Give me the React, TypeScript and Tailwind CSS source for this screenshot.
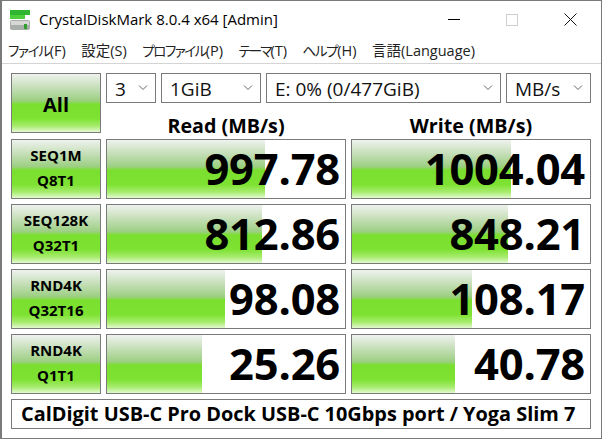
import React from 'react';

const FONT = "font-['Open_Sans','Noto_Sans_CJK_JP',sans-serif]";
const BAR = 'bg-[linear-gradient(to_bottom,#eef2ee_0%,#c8e0bc_22%,#9ccf82_46%,#7bdf2f_52%,#7ee232_77%,#a8ec70_90%,#e4f9d0_100%)]';

const rows = [
  { top: 'SEQ1M', bottom: 'Q8T1', read: '997.78', readBar: 158, write: '1004.04', writeBar: 159 },
  { top: 'SEQ128K', bottom: 'Q32T1', read: '812.86', readBar: 155, write: '848.21', writeBar: 156 },
  { top: 'RND4K', bottom: 'Q32T16', read: '98.08', readBar: 118, write: '108.17', writeBar: 120 },
  { top: 'RND4K', bottom: 'Q1T1', read: '25.26', readBar: 95, write: '40.78', writeBar: 103 },
];

// the kana in the menu run narrower than Noto's, so they get their own size and tracking
const menus = [
  { kana: 'ファイル', tight: 'text-[13.5px] tracking-[-1.25px]', rest: '(F)' },
  { kana: '設定', tight: 'text-[14.5px]', rest: '(S)' },
  { kana: 'プロファイル', tight: 'text-[13.5px] tracking-[-1.5px]', rest: '(P)' },
  { kana: 'テーマ', tight: 'text-[13.5px] tracking-[-1.9px]', rest: '(T)' },
  { kana: 'ヘルプ', tight: 'text-[13.5px] tracking-[-1.3px]', rest: '(H)' },
  { kana: '言語', tight: 'text-[14.5px]', rest: '(Language)' },
];

const Combo = ({ label, width }: { label: string; width: string }) => (
  <div className={`${width} h-[30px] border border-[#7a7a7a] bg-white flex items-center justify-between pl-2 pr-[7px] text-[19px] text-[#111]`}>
    <span className="pt-[2px]">{label}</span>
    <svg width="10" height="6" viewBox="0 0 10 6" fill="none" stroke="#666" strokeWidth="1">
      <path d="M1 .5l4 4 4-4" />
    </svg>
  </div>
);

const Score = ({ value, bar }: { value: string; bar: number }) => (
  <div className="relative h-[60px] border border-[#7a7a7a] bg-white overflow-hidden">
    <div className={`absolute inset-y-0 left-0 ${BAR}`} style={{ width: bar }} />
    <div className="relative h-full flex items-center justify-end pr-[5px] pb-px text-[43.5px] font-bold text-black tracking-[-0.2px]">
      {value}
    </div>
  </div>
);

export default function App() {
  return (
    <div className={`${FONT} w-[602px] h-[439px] bg-white border border-[#7a7a7a] border-l-2 flex flex-col overflow-hidden`}>
      <div className="h-[37px] flex items-center shrink-0">
        <svg className="ml-[8px] mt-[2px]" width="21" height="21" viewBox="0 0 21 21">
          <rect x="0" y="0" width="20" height="5" fill="#2fb52f" />
          <rect x="0" y="5" width="15" height="4" fill="#4ccf3a" />
          <rect x="0" y="10" width="20" height="10" rx="2" fill="#a9aeaa" />
          <rect x="1" y="11" width="18" height="4" fill="#d5d8d5" />
          <rect x="14" y="14" width="3" height="5" fill="#2f9e2f" />
        </svg>
        <span className="ml-[8px] text-[15px] text-black">CrystalDiskMark 8.0.4 x64 [Admin]</span>
        <div className="ml-auto flex items-center">
          <div className="w-[12px] h-px bg-black mr-[46px]" />
          <div className="w-[12px] h-[12px] border border-[#cfcfcf] mr-[46px]" />
          <svg className="mr-[24px]" width="13" height="13" viewBox="0 0 13 13" stroke="#111" strokeWidth="1" fill="none">
            <path d="M.5.5l12 12M12.5.5l-12 12" />
          </svg>
        </div>
      </div>
      <div className="h-[25px] shrink-0 flex items-center pl-[6px] gap-[15.5px] text-[14.5px] text-[#222] border-b border-[#d4d4d4] box-content">
        {menus.map(m => (
          <span key={m.kana}>
            <span className={`[font-feature-settings:'palt'] ${m.tight}`}>{m.kana}</span>
            {m.rest}
          </span>
        ))}
      </div>
      <div className="pt-[9px] pl-[9px] grid grid-cols-[90px_240px_240px] gap-x-[5px]">
        <div className={`row-span-2 h-[60px] border border-[#7a7a7a] ${BAR} flex items-center justify-center pt-[3px] text-[20px] font-bold text-black`}>
          All
        </div>
        <div className="col-span-2 flex gap-[5px] w-[485px] h-[30px]">
          <Combo label="3" width="w-[50px]" />
          <Combo label="1GiB" width="w-[100px]" />
          <Combo label="E: 0% (0/477GiB)" width="w-[235px]" />
          <Combo label="MB/s" width="w-[85px]" />
        </div>
        <div className="h-[30px] pt-[15px] flex items-center justify-center text-[19.7px] leading-none font-bold text-black">Read (MB/s)</div>
        <div className="h-[30px] pt-[15px] flex items-center justify-center text-[19.7px] leading-none font-bold text-black">Write (MB/s)</div>
        <div className="col-span-3 mt-[6px] grid grid-cols-[90px_240px_240px] gap-x-[5px] gap-y-[5px]">
          {rows.map(r => (
            <React.Fragment key={r.bottom}>
              <div className={`h-[60px] border border-[#7a7a7a] ${BAR} flex flex-col items-center justify-center pb-[2px] text-[15px] leading-[25px] font-bold text-black`}>
                <span>{r.top}</span>
                <span>{r.bottom}</span>
              </div>
              <Score value={r.read} bar={r.readBar} />
              <Score value={r.write} bar={r.writeBar} />
            </React.Fragment>
          ))}
          <div className="col-span-3 h-[30px] border border-[#7a7a7a] bg-white flex items-center pl-[9px] text-[19.9px] font-bold text-black">
            CalDigit USB-C Pro Dock USB-C 10Gbps port / Yoga Slim 7
          </div>
        </div>
      </div>
    </div>
  );
}
